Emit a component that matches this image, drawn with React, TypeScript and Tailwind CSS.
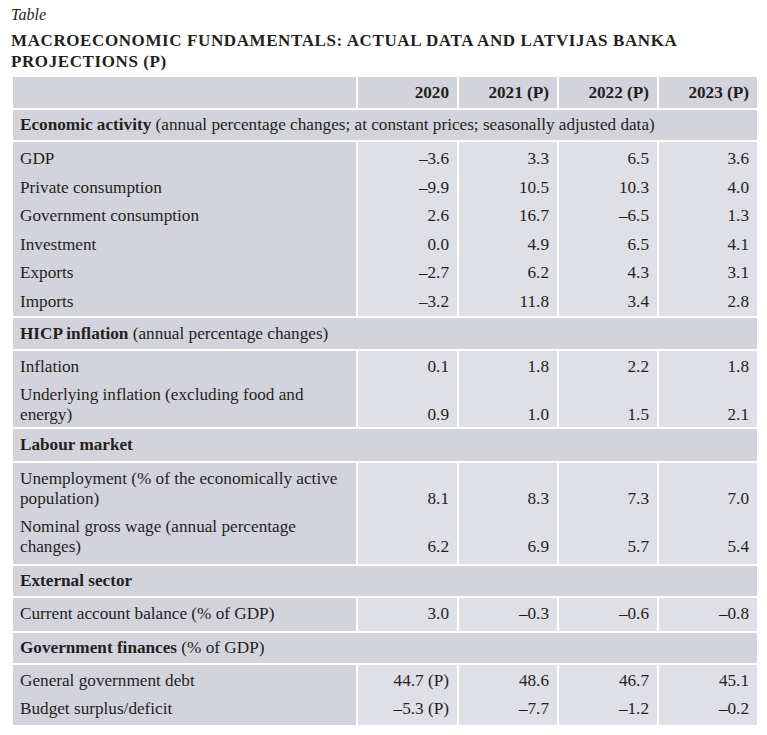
const COLS = "grid grid-cols-[343px_99px_98px_98px_98px] gap-x-[2px]";
const DARK = "bg-[#d3d4db]";
const LIGHT = "bg-[#dfe0e5]";

type Row = { label: string[]; values: string[] };
type Block = {
  title: string;
  note?: string;
  head: string;
  pad: string;
  spacer: string;
  rows: Row[];
};

const m = (s: string) => s.replace(/-/g, "\u2013");

const BLOCKS: Block[] = [
  {
    title: "Economic activity",
    note: " (annual percentage changes; at constant prices; seasonally adjusted data)",
    head: "h-[30px]",
    pad: "pt-[7px] pb-[1.5px]",
    spacer: "h-[3px]",
    rows: [
      { label: ["GDP"], values: ["-3.6", "3.3", "6.5", "3.6"] },
      { label: ["Private consumption"], values: ["-9.9", "10.5", "10.3", "4.0"] },
      { label: ["Government consumption"], values: ["2.6", "16.7", "-6.5", "1.3"] },
      { label: ["Investment"], values: ["0.0", "4.9", "6.5", "4.1"] },
      { label: ["Exports"], values: ["-2.7", "6.2", "4.3", "3.1"] },
      { label: ["Imports"], values: ["-3.2", "11.8", "3.4", "2.8"] },
    ],
  },
  {
    title: "HICP inflation",
    note: " (annual percentage changes)",
    head: "h-[31px]",
    pad: "pt-[6px] pb-[2px]",
    spacer: "h-0",
    rows: [
      { label: ["Inflation"], values: ["0.1", "1.8", "2.2", "1.8"] },
      {
        label: ["Underlying inflation (excluding food and", "energy)"],
        values: ["0.9", "1.0", "1.5", "2.1"],
      },
    ],
  },
  {
    title: "Labour market",
    head: "h-[32px]",
    pad: "pt-[6px] pb-[2px]",
    spacer: "h-[5px]",
    rows: [
      {
        label: ["Unemployment (% of the economically active", "population)"],
        values: ["8.1", "8.3", "7.3", "7.0"],
      },
      {
        label: ["Nominal gross wage (annual percentage", "changes)"],
        values: ["6.2", "6.9", "5.7", "5.4"],
      },
    ],
  },
  {
    title: "External sector",
    head: "h-[30px]",
    pad: "pt-[6px] pb-[2px]",
    spacer: "h-[5px]",
    rows: [
      { label: ["Current account balance (% of GDP)"], values: ["3.0", "-0.3", "-0.6", "-0.8"] },
    ],
  },
  {
    title: "Government finances",
    note: " (% of GDP)",
    head: "h-[30px]",
    pad: "pt-[6px] pb-[2px]",
    spacer: "h-[4px]",
    rows: [
      { label: ["General government debt"], values: ["44.7 (P)", "48.6", "46.7", "45.1"] },
      { label: ["Budget surplus/deficit"], values: ["-5.3 (P)", "-7.7", "-1.2", "-0.2"] },
    ],
  },
];

function DataBlock({ block }: { block: Block }) {
  return (
    <div className={COLS}>
      {block.rows.map((row) => (
        <div key={row.label[0]} className="contents">
          <div className={`${DARK} pl-[7px] ${block.pad}`}>
            {row.label.map((l) => (
              <div key={l}>{l}</div>
            ))}
          </div>
          {row.values.map((v, i) => (
            <div
              key={i}
              className={`${LIGHT} pr-[8px] ${block.pad} flex flex-col justify-end text-right`}
            >
              {m(v)}
            </div>
          ))}
        </div>
      ))}
      <div className={`${DARK} ${block.spacer}`} />
      <div className={`${LIGHT} ${block.spacer}`} />
      <div className={`${LIGHT} ${block.spacer}`} />
      <div className={`${LIGHT} ${block.spacer}`} />
      <div className={`${LIGHT} ${block.spacer}`} />
    </div>
  );
}

export default function App() {
  return (
    <div className="bg-white w-[767px] h-[735px] pl-[11px] pt-[5px] text-[17.2px] leading-[20px] text-[#231f20] font-['Liberation_Serif','Times_New_Roman',serif]">
      <div className="italic text-[16px]">Table</div>
      <div className="mt-[5px] text-[17px] font-bold leading-[21px] tracking-[0.6px]">
        MACROECONOMIC FUNDAMENTALS: ACTUAL DATA AND LATVIJAS BANKA
        <br />
        PROJECTIONS (P)
      </div>
      <div className="mt-[5px] ml-[2px] w-[744px] flex flex-col gap-y-[2px]">
        <div className={COLS}>
          <div className={`${DARK} h-[31px]`} />
          {["2020", "2021 (P)", "2022 (P)", "2023 (P)"].map((y) => (
            <div
              key={y}
              className={`${DARK} h-[31px] pr-[8px] flex items-center justify-end font-bold`}
            >
              {y}
            </div>
          ))}
        </div>
        {BLOCKS.map((b) => (
          <div key={b.title} className="contents">
            <div className={`${DARK} ${b.head} pl-[7px] flex items-center`}>
              <span>
                <span className="font-bold">{b.title}</span>
                {b.note}
              </span>
            </div>
            <DataBlock block={b} />
          </div>
        ))}
      </div>
    </div>
  );
}
